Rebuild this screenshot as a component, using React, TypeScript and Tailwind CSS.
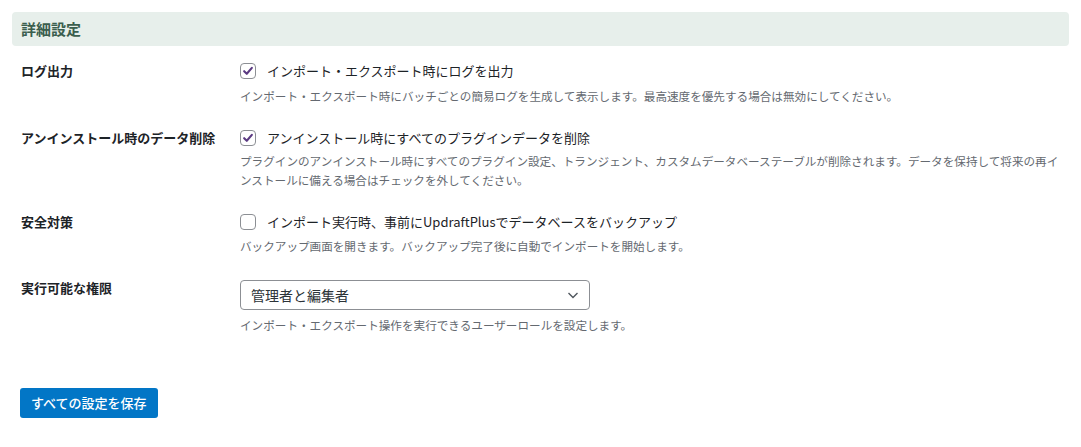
import React from 'react';

const font = { fontFamily: '"Noto Sans CJK JP", "Noto Sans", sans-serif' };

const Check = ({ checked }: { checked: boolean }) => (
    <span className="w-4 h-4 shrink-0 rounded-[4px] border border-[#8c8f94] bg-white flex items-center justify-center">
        {checked && (
            <svg viewBox="0 0 16 16" className="w-[14px] h-[14px]">
                <path d="M3.6 8.2 L6.6 11.2 L12.4 4.4" fill="none" stroke="#5b3a82" strokeWidth="2.4" strokeLinecap="round" strokeLinejoin="round" />
            </svg>
        )}
    </span>
);

const Row = ({ label, children, className }: { label: string; children: React.ReactNode; className?: string }) => (
    <div className={`flex ${className ?? ''}`}>
        <div className="w-[219px] shrink-0 text-[13px] font-bold text-[#1d2327] leading-[16px]">{label}</div>
        <div className="flex-1 min-w-0">{children}</div>
    </div>
);

const CheckLine = ({ checked, text }: { checked: boolean; text: string }) => (
    <label className="flex items-center gap-[11px] h-4 text-[13px] text-[#1d2327]">
        <Check checked={checked} />
        <span>{text}</span>
    </label>
);

const Desc = ({ children, className }: { children: React.ReactNode; className?: string }) => (
    <p className={`text-[11.6px] leading-[19px] text-[#646970] ${className ?? ''}`}>{children}</p>
);

export default function App() {
    return (
        <div className="w-[1081px] h-[447px] bg-white pt-3 overflow-hidden" style={font}>
            <div className="mx-3 w-[1057px] h-[34px] rounded-[4px] bg-[#e7efeb] flex items-center pl-[9px]">
                <h2 className="text-[15px] font-bold text-[#3b5e4e]">詳細設定</h2>
            </div>

            <div className="pl-[21px] pr-[10px]">
                <Row label="ログ出力" className="mt-[17px]">
                    <CheckLine checked text="インポート・エクスポート時にログを出力" />
                    <Desc className="mt-[8px]">インポート・エクスポート時にバッチごとの簡易ログを生成して表示します。最高速度を優先する場合は無効にしてください。</Desc>
                </Row>

                <Row label="アンインストール時のデータ削除" className="mt-[24px]">
                    <CheckLine checked text="アンインストール時にすべてのプラグインデータを削除" />
                    <Desc className="mt-[6px] w-[822px]">プラグインのアンインストール時にすべてのプラグイン設定、トランジェント、カスタムデータベーステーブルが削除されます。データを保持して将来の再インストールに備える場合はチェックを外してください。</Desc>
                </Row>

                <Row label="安全対策" className="mt-[24px]">
                    <CheckLine checked={false} text="インポート実行時、事前にUpdraftPlusでデータベースをバックアップ" />
                    <Desc className="mt-[7px]">バックアップ画面を開きます。バックアップ完了後に自動でインポートを開始します。</Desc>
                </Row>

                <Row label="実行可能な権限" className="mt-[24px]">
                    <div className="w-[350px] h-[30px] rounded-[4px] border border-[#8c8f94] bg-white flex items-center justify-between pl-[10px] pr-[8px]">
                        <span className="text-[14px] text-[#2c3338]">管理者と編集者</span>
                        <svg viewBox="0 0 16 16" className="w-4 h-4">
                            <path d="M3.5 6 L8 10.5 L12.5 6" fill="none" stroke="#50575e" strokeWidth="1.4" />
                        </svg>
                    </div>
                    <Desc className="mt-[6px]">インポート・エクスポート操作を実行できるユーザーロールを設定します。</Desc>
                </Row>
            </div>

            <div className="pl-5 mt-[53px]">
                <button className="h-[30px] px-[11px] rounded-[3px] bg-[#0276c6] text-white text-[13px] font-medium">すべての設定を保存</button>
            </div>
        </div>
    );
}
